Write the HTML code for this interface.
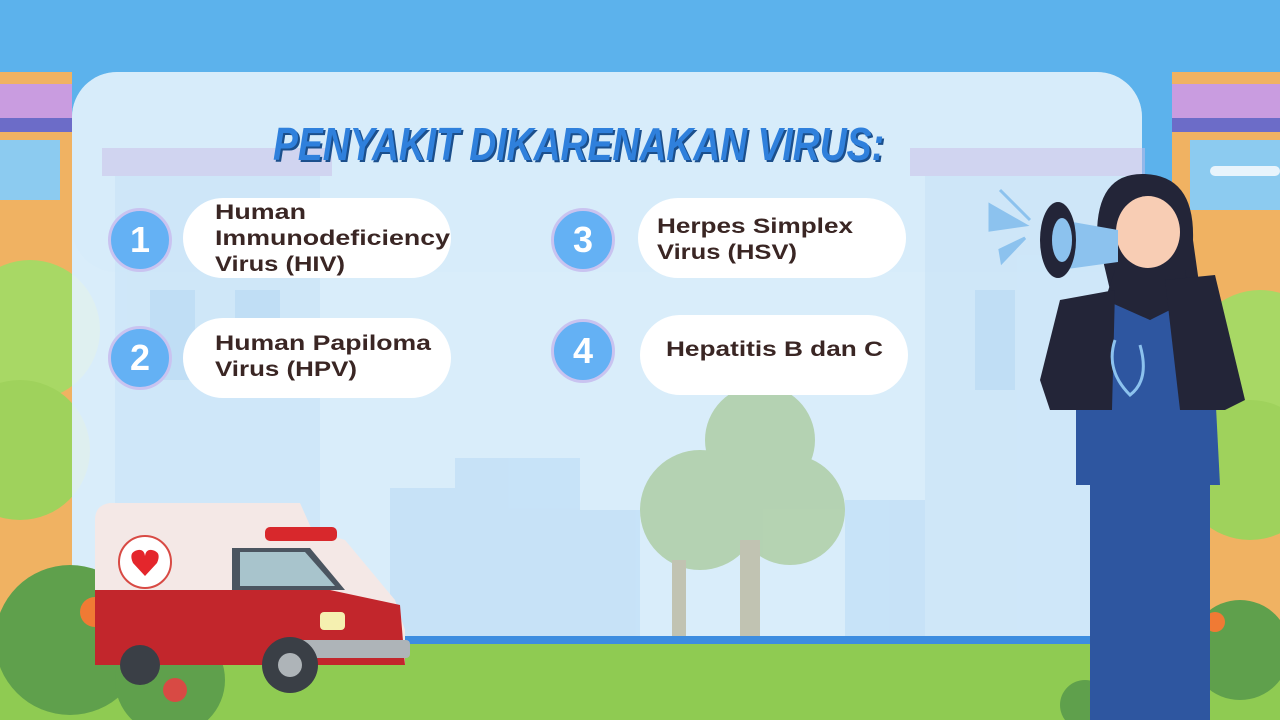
<!DOCTYPE html>
<html><head><meta charset="utf-8"><style>
body{margin:0;width:1280px;height:720px;overflow:hidden;position:relative;font-family:"Liberation Sans",sans-serif;}
svg{position:absolute;left:0;top:0}
.c{position:absolute;width:58px;height:58px;border-radius:50%;background:#64b1f4;border:3px solid #c9c3f0;color:#fff;font-weight:bold;font-size:36px;text-align:center;line-height:58px;}
.p{position:absolute;background:#fff;border-radius:40px;height:80px;}
</style></head><body>
<svg width="1280" height="720" viewBox="0 0 1280 720">
<rect width="1280" height="720" fill="#5cb2ec"/>
<rect x="0" y="72" width="72" height="560" fill="#f0b262"/>
<rect x="0" y="84" width="72" height="34" fill="#c99ce0"/>
<rect x="0" y="118" width="72" height="14" fill="#6c6cc8"/>
<rect x="0" y="140" width="60" height="60" fill="#8ccbf0"/>
<rect x="1172" y="72" width="108" height="560" fill="#f0b262"/>
<rect x="1172" y="84" width="108" height="34" fill="#c99ce0"/>
<rect x="1172" y="118" width="108" height="14" fill="#6c6cc8"/>
<rect x="1190" y="140" width="90" height="70" fill="#8ccbf0"/>
<rect x="1210" y="166" width="70" height="10" rx="5" fill="#e8f4fc"/>
<circle cx="30" cy="330" r="70" fill="#a8d865"/>
<circle cx="20" cy="450" r="70" fill="#9fd25c"/>
<circle cx="1260" cy="360" r="70" fill="#a8d865"/>
<circle cx="1250" cy="470" r="70" fill="#9fd25c"/>
<rect x="0" y="640" width="1280" height="80" fill="#8fcb52"/>
<rect x="72" y="72" width="1070" height="570" rx="45" fill="#e3f1fb" opacity="0.93"/>
<rect x="72" y="72" width="1070" height="200" rx="45" fill="#d6ebfa" opacity="0.5"/>
<g opacity="0.5">
<rect x="102" y="148" width="230" height="28" fill="#cbbde8"/>
<rect x="115" y="176" width="205" height="460" fill="#c6e2f8"/>
<rect x="150" y="290" width="45" height="90" fill="#a9d0f2"/><rect x="235" y="290" width="45" height="90" fill="#a9d0f2"/>
<rect x="910" y="148" width="235" height="28" fill="#cbbde8"/>
<rect x="925" y="176" width="215" height="460" fill="#c6e2f8"/>
<rect x="975" y="290" width="40" height="100" fill="#a9d0f2"/>
<rect x="390" y="488" width="70" height="150" fill="#b6d9f6"/>
<rect x="455" y="458" width="125" height="180" fill="#b6d9f6"/>
<rect x="580" y="510" width="60" height="128" fill="#b6d9f6"/>
<rect x="845" y="500" width="80" height="138" fill="#b6d9f6"/>
</g>
<g opacity="0.75">
<circle cx="760" cy="440" r="55" fill="#a8c99a"/>
<circle cx="700" cy="510" r="60" fill="#a8c99a"/>
<circle cx="790" cy="510" r="55" fill="#a8c99a"/>
<rect x="740" y="540" width="20" height="100" fill="#b9b59a"/>
<rect x="672" y="560" width="14" height="78" fill="#b9b59a"/>
</g>
<rect x="340" y="636" width="750" height="8" fill="#3d8de0"/>
<circle cx="70" cy="640" r="75" fill="#5fa04c"/>
<circle cx="170" cy="680" r="55" fill="#5fa04c"/>
<circle cx="95" cy="612" r="15" fill="#f07a34"/>
<circle cx="175" cy="690" r="12" fill="#d84a44"/>
<circle cx="1240" cy="650" r="50" fill="#5fa04c"/>
<circle cx="1215" cy="622" r="10" fill="#f07a34"/>
<circle cx="1085" cy="705" r="25" fill="#5fa04c"/>
<path d="M95 520 Q95 505 110 503 L300 503 L312 530 L345 540 L395 600 L405 630 L405 665 L95 665 Z" fill="#f4e8e6"/>
<path d="M95 590 L330 590 L400 605 L405 665 L95 665 Z" fill="#c2262c"/>
<rect x="265" y="527" width="72" height="14" rx="5" fill="#d8282c"/>
<path d="M232 548 L310 548 L345 590 L232 590 Z" fill="#4b5560"/>
<path d="M240 552 L305 552 L335 586 L240 586 Z" fill="#a8c4cc"/>
<circle cx="145" cy="562" r="26" fill="#fff" stroke="#d84a44" stroke-width="2"/>
<path d="M145 576 L133 563 Q128 552 138 550 Q144 549 145 556 Q146 549 152 550 Q162 552 157 563 Z" fill="#e4262c"/>
<rect x="300" y="640" width="110" height="18" rx="4" fill="#aeb4b8"/>
<circle cx="290" cy="665" r="28" fill="#3a3f46"/><circle cx="290" cy="665" r="12" fill="#aeb4b8"/>
<circle cx="140" cy="665" r="20" fill="#3a3f46"/>
<rect x="320" y="612" width="25" height="18" rx="4" fill="#f5f0b0"/>
<path d="M990 205 L1025 225 L990 230 Z M1000 250 L1025 238 L1002 262 Z M1000 190 L1030 220" fill="#8cc2ee" stroke="#8cc2ee" stroke-width="3"/>
<rect x="1090" y="485" width="120" height="235" fill="#2e56a0"/>
<path d="M1076 300 L1210 290 L1220 485 L1076 485 Z" fill="#2e56a0"/>
<path d="M1097 235 Q1097 172 1145 174 Q1195 176 1193 240 L1200 290 L1150 320 L1110 290 Z" fill="#232538"/>
<ellipse cx="1148" cy="232" rx="32" ry="36" fill="#f8cdb4"/>
<path d="M1115 270 L1185 270 L1190 300 L1150 320 L1105 300 Z" fill="#232538"/>
<path d="M1060 300 L1115 290 L1112 410 L1050 410 L1040 380 Z" fill="#232538"/>
<path d="M1165 280 L1215 275 L1245 400 L1225 410 L1180 410 Z" fill="#232538"/>
<path d="M1050 218 L1118 230 L1118 262 L1060 270 Z" fill="#8cc2ee"/>
<ellipse cx="1058" cy="240" rx="18" ry="38" fill="#232538"/>
<ellipse cx="1062" cy="240" rx="10" ry="22" fill="#8cc2ee"/>
<path d="M1115 340 Q1105 370 1130 395 Q1150 380 1140 345" fill="none" stroke="#8cc2ee" stroke-width="3"/>
</svg>
<div class="c" style="left:108px;top:208px">1</div>
<div class="p" style="left:183px;top:198px;width:268px"></div>
<div class="c" style="left:108px;top:326px">2</div>
<div class="p" style="left:183px;top:318px;width:268px"></div>
<div class="c" style="left:551px;top:208px">3</div>
<div class="p" style="left:638px;top:198px;width:268px"></div>
<div class="c" style="left:551px;top:319px">4</div>
<div class="p" style="left:640px;top:315px;width:268px"></div>
<svg width="1280" height="720" viewBox="0 0 1280 720" style="font-family:'Liberation Sans',sans-serif;font-weight:bold">
<text x="275" y="162" font-size="46" font-style="italic" textLength="611" lengthAdjust="spacingAndGlyphs" fill="#1b4f8c">PENYAKIT DIKARENAKAN VIRUS:</text>
<text x="273" y="160" font-size="46" font-style="italic" textLength="611" lengthAdjust="spacingAndGlyphs" fill="#2f80dc">PENYAKIT DIKARENAKAN VIRUS:</text>
<g font-size="21" fill="#3a2624">
<text x="215" y="219" textLength="91" lengthAdjust="spacingAndGlyphs">Human</text>
<text x="215" y="245" textLength="235" lengthAdjust="spacingAndGlyphs">Immunodeficiency</text>
<text x="215" y="271" textLength="130" lengthAdjust="spacingAndGlyphs">Virus (HIV)</text>
<text x="215" y="350" textLength="216" lengthAdjust="spacingAndGlyphs">Human Papiloma</text>
<text x="215" y="376" textLength="142" lengthAdjust="spacingAndGlyphs">Virus (HPV)</text>
<text x="657" y="233" textLength="196" lengthAdjust="spacingAndGlyphs">Herpes Simplex</text>
<text x="657" y="259" textLength="140" lengthAdjust="spacingAndGlyphs">Virus (HSV)</text>
<text x="666" y="356" textLength="217" lengthAdjust="spacingAndGlyphs">Hepatitis B dan C</text>
</g>
</svg>
</body></html>
